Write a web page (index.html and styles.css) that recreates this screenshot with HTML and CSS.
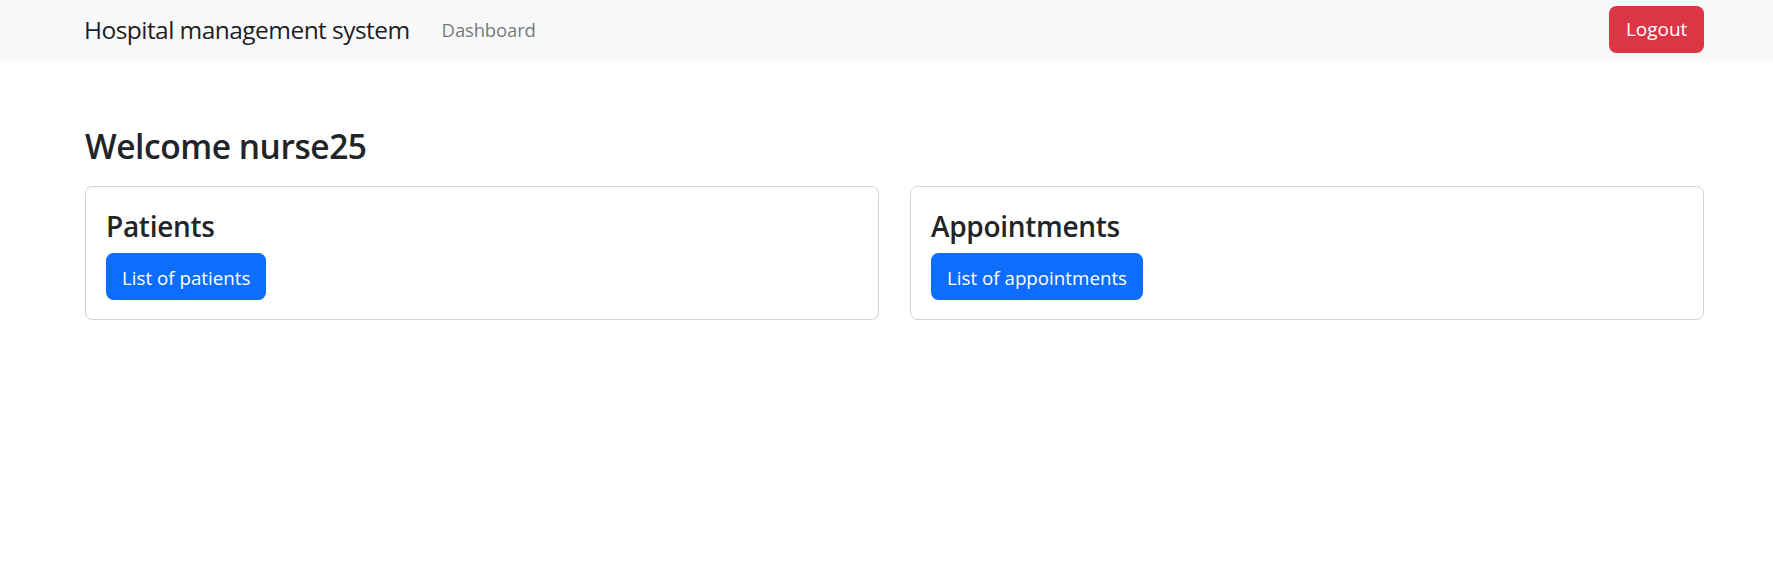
FILE: index.html
```html
<!DOCTYPE html>
<html lang="en">
<head>
<meta charset="utf-8">
<title>Hospital management system</title>
<link rel="stylesheet" href="styles.css">
</head>
<body>
<nav class="navbar">
  <div class="container nav-inner">
    <a class="brand" href="#">Hospital management system</a>
    <a class="nav-link" href="#">Dashboard</a>
    <span class="spacer"></span>
    <button class="btn btn-danger">Logout</button>
  </div>
</nav>
<main class="container main">
  <h3 class="welcome">Welcome nurse25</h3>
  <div class="cards">
    <div class="card">
      <h4 class="card-title">Patients</h4>
      <a class="btn btn-primary" href="#">List of patients</a>
    </div>
    <div class="card">
      <h4 class="card-title">Appointments</h4>
      <a class="btn btn-primary" href="#">List of appointments</a>
    </div>
  </div>
</main>
</body>
</html>
```
FILE: styles.css
```css
* { box-sizing: border-box; }
html, body { margin: 0; padding: 0; }
body {
  font-family: "Open Sans", "Noto Sans", sans-serif;
  color: #212529;
  background: #fff;
}
a { text-decoration: none; }

.container {
  padding-left: 85px;
  padding-right: 69px;
}

.navbar {
  height: 63px;
  background: #f8f9fa;
}
.nav-inner {
  display: flex;
  align-items: flex-start;
  height: 63px;
}
.brand {
  margin-top: 15px;
  margin-left: -1px;
  font-size: 24.5px;
  line-height: 30px;
  letter-spacing: -0.55px;
  color: rgba(0, 0, 0, 0.9);
  white-space: nowrap;
}
.nav-link {
  margin-top: 17.5px;
  margin-left: 32px;
  font-size: 18.5px;
  line-height: 24px;
  letter-spacing: -0.15px;
  color: rgba(0, 0, 0, 0.55);
}
.spacer { flex: 1; }

.btn {
  display: inline-block;
  border: 0;
  border-radius: 7.5px;
  color: #fff;
  font-family: inherit;
  cursor: pointer;
  white-space: nowrap;
}
.btn-danger {
  margin-top: 6px;
  height: 47px;
  padding: 0 16.6px;
  background: #dc3545;
  font-size: 19px;
  line-height: 47px;
}
.btn-primary {
  height: 47px;
  padding: 2px 16px 0;
  background: #0d6efd;
  font-size: 18.75px;
  line-height: 45px;
}

.main { padding-top: 63px; }
.welcome {
  margin: 0 0 20px;
  font-size: 33.5px;
  line-height: 40px;
  font-weight: 600;
  letter-spacing: -0.45px;
}
.cards {
  display: grid;
  grid-template-columns: 1fr 1fr;
  gap: 31px;
}
.card {
  border: 1px solid rgba(0, 0, 0, 0.175);
  border-radius: 7.5px;
  padding: 21px 19px 19px 20px;
}
.card-title {
  margin: 0 0 9px;
  font-size: 28px;
  line-height: 36px;
  font-weight: 600;
  letter-spacing: -0.3px;
}
```
